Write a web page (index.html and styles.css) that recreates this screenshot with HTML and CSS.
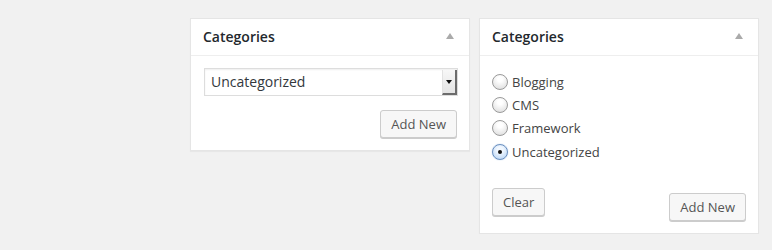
FILE: index.html
```html
<!DOCTYPE html>
<html lang="en">
<head>
    <meta charset="UTF-8">
    <title>Categories</title>
    <link rel="stylesheet" href="styles.css">
</head>
<body>
<div class="widgets">
    <div class="postbox postbox-short">
        <div class="postbox-head">
            <h2 class="postbox-title">Categories</h2>
            <span class="toggle-arrow"></span>
        </div>
        <div class="postbox-inside">
            <div class="fake-select">
                <span class="fake-select-value">Uncategorized</span>
                <span class="fake-select-btn"><span class="fake-select-caret"></span></span>
            </div>
            <div class="actions actions-right">
                <button class="button">Add New</button>
            </div>
        </div>
    </div>

    <div class="postbox">
        <div class="postbox-head">
            <h2 class="postbox-title">Categories</h2>
            <span class="toggle-arrow"></span>
        </div>
        <div class="postbox-inside">
            <ul class="radio-list">
                <li><span class="radio"></span>Blogging</li>
                <li><span class="radio"></span>CMS</li>
                <li><span class="radio"></span>Framework</li>
                <li><span class="radio checked"></span>Uncategorized</li>
            </ul>
            <div class="actions actions-split">
                <button class="button">Clear</button>
                <button class="button button-low">Add New</button>
            </div>
        </div>
    </div>
</div>
</body>
</html>
```

FILE: styles.css
```css
html, body {
    margin: 0;
    background: #f1f1f1;
    font-family: "Open Sans", "Liberation Sans", sans-serif;
    color: #444;
    font-size: 13px;
}

.widgets {
    display: flex;
    align-items: flex-start;
    gap: 9px;
    padding: 18px 0 0 190px;
}

.postbox {
    width: 278px;
    background: #fff;
    border: 1px solid #e5e5e5;
    box-shadow: 0 1px 1px rgba(0, 0, 0, 0.04);
}

.postbox-head {
    display: flex;
    align-items: center;
    justify-content: space-between;
    height: 34px;
    padding: 0 12px 2px;
    border-bottom: 1px solid #eee;
}

.postbox-title {
    margin: 0;
    font-size: 14px;
    font-weight: 600;
    color: #23282d;
}

.toggle-arrow {
    width: 0;
    height: 0;
    margin-right: 3px;
    border-left: 4px solid transparent;
    border-right: 4px solid transparent;
    border-bottom: 6px solid #aaa;
}

.postbox-inside {
    padding: 12px 11px 12px 12px;
}

.fake-select {
    display: flex;
    height: 26px;
    margin-left: 1px;
    border: 1px solid #ddd;
    background: #fff;
    box-shadow: inset 0 1px 2px rgba(0, 0, 0, 0.07);
}

.fake-select-value {
    flex: 1;
    padding-left: 6px;
    font-size: 14px;
    line-height: 26px;
    color: #32373c;
}

.fake-select-btn {
    display: flex;
    align-items: center;
    justify-content: center;
    width: 12px;
    margin: 1px 0 0;
    background: linear-gradient(#f7f7f7, #e4e4e4);
    border-left: 1px solid #e2e2e2;
    border-right: 2px solid #6c6c6c;
    border-bottom: 2px solid #6c6c6c;
}

.fake-select-caret {
    width: 0;
    height: 0;
    border-left: 3px solid transparent;
    border-right: 3px solid transparent;
    border-top: 4px solid #111;
}

.actions {
    display: flex;
}

.actions-right {
    justify-content: flex-end;
    margin-top: 14px;
}

.actions-right .button {
    margin-right: 1px;
}

.actions-split {
    justify-content: space-between;
    align-items: flex-start;
    margin-top: 24px;
}

.button {
    height: 28px;
    padding: 0 10px 1px;
    font-family: inherit;
    font-size: 13px;
    line-height: 26px;
    color: #555;
    background: #f7f7f7;
    border: 1px solid #ccc;
    border-radius: 3px;
    box-shadow: 0 1px 0 #ccc;
    cursor: pointer;
}

.button-low {
    margin: 5px 1px 0 0;
}

.radio-list {
    list-style: none;
    margin: 2px 0 0;
    padding: 0;
}

.radio-list li {
    display: flex;
    align-items: center;
    height: 23.4px;
    font-size: 13px;
    color: #444;
}

.radio {
    box-sizing: border-box;
    width: 16px;
    height: 16px;
    margin-right: 4px;
    border: 1px solid #9a9a9a;
    border-radius: 50%;
    background: radial-gradient(circle at 50% 30%, #fff 20%, #ddd 90%);
    display: flex;
    align-items: center;
    justify-content: center;
}

.radio.checked {
    border-color: #6a8fbf;
    background: radial-gradient(circle at 50% 35%, #f2f8ff 25%, #b7d4f4 90%);
    box-shadow: 0 0 1px #7fa7d8;
}

.radio.checked::after {
    content: "";
    width: 4px;
    height: 4px;
    border-radius: 50%;
    background: #111;
}
```
